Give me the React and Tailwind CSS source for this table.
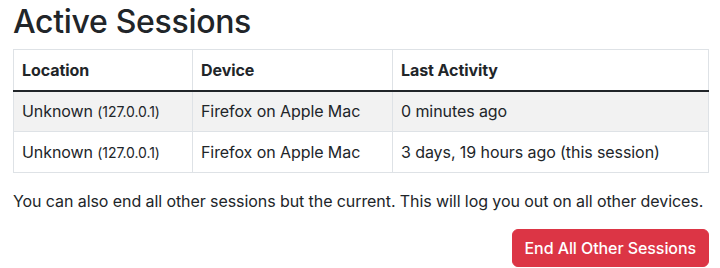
const sessions = [
  { ip: '127.0.0.1', device: 'Firefox on Apple Mac', last: '0 minutes ago' },
  { ip: '127.0.0.1', device: 'Firefox on Apple Mac', last: '3 days, 19 hours ago (this session)' },
];

export default function App() {
  return (
    <div className="w-[720px] h-[268px] bg-white text-[#212529] pl-[13px] pr-[11px] pt-[3px] font-['Inter',sans-serif] text-base leading-6 tracking-[-0.005em] overflow-hidden">
      <h2 className="text-[32px] leading-[38px] font-medium mb-2 tracking-[-0.01em]">Active Sessions</h2>

      <table className="w-full border-collapse border border-[#dee2e6] mb-4">
        <thead>
          <tr className="border-b-2 border-b-[#212529]">
            <th className="w-[179px] h-[41px] text-left font-bold px-2 py-0 border-r border-[#dee2e6]">Location</th>
            <th className="w-[200px] h-[41px] text-left font-bold px-2 py-0 border-r border-[#dee2e6]">Device</th>
            <th className="h-[41px] text-left font-bold px-2 py-0">Last Activity</th>
          </tr>
        </thead>
        <tbody>
          {sessions.map((s, i) => (
            <tr key={i} className={`border-b border-[#dee2e6] ${i === 0 ? 'bg-[#f2f2f2]' : 'bg-white'}`}>
              <td className="h-[41px] px-2 py-0 border-r border-[#dee2e6]">
                Unknown <small className="text-[14px] leading-none">({s.ip})</small>
              </td>
              <td className="h-[41px] px-2 py-0 border-r border-[#dee2e6]">{s.device}</td>
              <td className="h-[41px] px-2 py-0">{s.last}</td>
            </tr>
          ))}
        </tbody>
      </table>

      <p className="mb-4 whitespace-nowrap">
        You can also end all other sessions but the current. This will log you out on all other devices.
      </p>

      <div className="flex justify-end">
        <button className="bg-[#dc3545] text-white font-medium px-3 py-1.5 rounded-md border border-[#dc3545] leading-6">
          End All Other Sessions
        </button>
      </div>
    </div>
  );
}
